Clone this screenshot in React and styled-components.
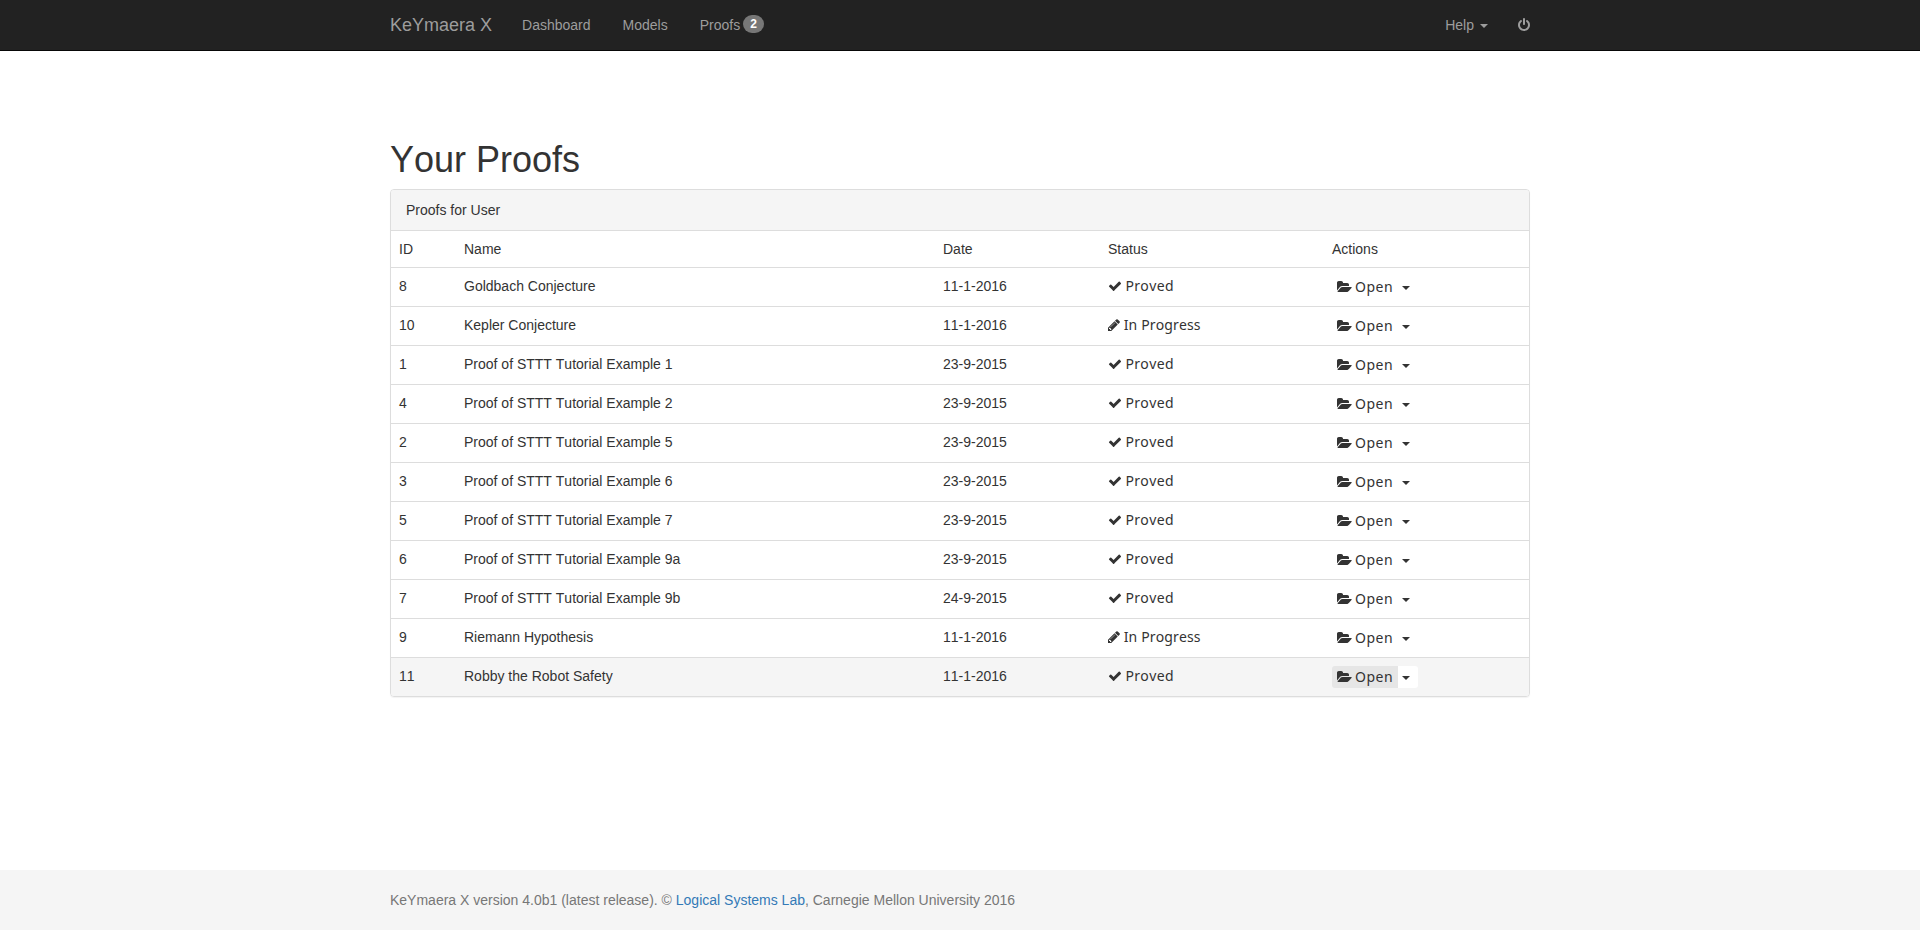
import React from 'react';
import styled, { createGlobalStyle } from 'styled-components';

const GlobalStyle = createGlobalStyle`
  *, *::before, *::after { box-sizing: border-box; }
  body {
    margin: 0;
    background: #fff;
    color: #333;
    font: 14px/20px "Liberation Sans", Arial, sans-serif;
    font-kerning: none;
  }
`;

const Page = styled.div`
  display: flex;
  flex-direction: column;
  min-height: 100vh;
`;

const Container = styled.div`
  width: 1140px;
  margin: 0 auto;
`;

const Navbar = styled.nav`
  height: 51px;
  background: #222;
  border-bottom: 1px solid #080808;
`;

const NavContent = styled(Container)`
  display: flex;
  height: 50px;
`;

const Brand = styled.a`
  padding: 15px 15px 15px 0;
  font-size: 18px;
  color: #9d9d9d;
`;

const NavLink = styled.a`
  padding: 15px ${(p) => p.$end ?? 17}px 15px 15px;
  color: #9d9d9d;
  white-space: nowrap;
`;

const NavRight = styled.div`
  display: flex;
  margin-left: auto;
`;

const Badge = styled.span`
  display: inline-block;
  min-width: 10px;
  margin-left: 3px;
  padding: 3px 7px;
  border-radius: 10px;
  background: #777;
  color: #fff;
  font-size: 12px;
  font-weight: bold;
  line-height: 12px;
  text-align: center;
  vertical-align: middle;
  margin-top: -5px;
`;

const Caret = styled.span`
  display: inline-block;
  margin-left: ${(p) => p.$gap || 0}px;
  border-top: 4px solid currentColor;
  border-left: 4px solid transparent;
  border-right: 4px solid transparent;
  vertical-align: middle;
`;

const Main = styled(Container).attrs({ as: 'main' })`
  flex: 1;
  padding-top: 89px;
`;

const Title = styled.h1`
  margin: 0 0 9px;
  font-size: 36px;
  font-weight: 500;
  line-height: 40px;
`;

const Panel = styled.section`
  border: 1px solid #ddd;
  border-radius: 4px;
  box-shadow: 0 1px 1px rgba(0, 0, 0, 0.05);
  overflow: hidden;
`;

const PanelHeading = styled.div`
  padding: 10px 15px;
  background: #f5f5f5;
`;

const Table = styled.table`
  width: 100%;
  table-layout: fixed;
  border-collapse: separate;
  border-spacing: 0;
`;

const Col = styled.col`
  width: ${(p) => p.$w}px;
`;

const Row = styled.tr`
  background: ${(p) => (p.$active ? '#f5f5f5' : 'transparent')};
`;

const Cell = styled.td`
  padding: 8px;
  border-top: 1px solid #ddd;
  vertical-align: top;
`;

const Status = styled.span`
  display: flex;
  align-items: center;
  height: 20px;
  gap: ${(p) => (p.$proved ? 3.4 : 3.7)}px;
  font-family: "Noto Sans", sans-serif;
  line-height: 14px;
  letter-spacing: ${(p) => (p.$proved ? 0.36 : 0.14)}px;
`;

const ButtonGroup = styled.div`
  display: flex;
  height: 22px;
`;

const OpenButton = styled.button`
  display: flex;
  align-items: center;
  gap: 3px;
  width: 66px;
  padding: 0 0 0 5px;
  border: 0;
  border-radius: 3px 0 0 3px;
  background: ${(p) => (p.$active ? '#e6e6e6' : '#fff')};
  color: #333;
  font: 14px/14px "Noto Sans", sans-serif;
  font-kerning: none;
  letter-spacing: 0.5px;
`;

const ToggleButton = styled.button`
  display: flex;
  align-items: center;
  justify-content: center;
  width: 20px;
  padding: 2px 4px 0 0;
  border: 0;
  border-radius: 0 3px 3px 0;
  background: #fff;
  color: #333;
`;

const Footer = styled.footer`
  height: 60px;
  padding: 20px 0;
  background: #f5f5f5;
  color: #777;
`;

const FooterLink = styled.a`
  color: #337ab7;
`;

const Glyph = styled.svg`
  flex: none;
  height: 14px;
  width: ${(p) => p.$w}px;
  fill: currentColor;
  vertical-align: ${(p) => p.$shift || 0}px;
`;

const CheckIcon = () => (
  <Glyph $w={14} viewBox="0 0 1792 1792">
    <path d="M1671 566q0 40-28 68l-724 724-136 136q-28 28-68 28t-68-28l-136-136-362-362q-28-28-28-68t28-68l136-136q28-28 68-28t68 28l294 295 656-657q28-28 68-28t68 28l136 136q28 28 28 68z" />
  </Glyph>
);

const PencilIcon = () => (
  <Glyph $w={12} viewBox="128 0 1536 1792">
    <path d="M491 1536l91-91-235-235-91 91v107h128v128h107zm523-928q0-22-22-22-10 0-17 7l-542 542q-7 7-7 17 0 22 22 22 10 0 17-7l542-542q7-7 7-17zm-54-192l416 416-832 832h-416v-416zm683 96q0 53-37 90l-166 166-416-416 166-165q36-38 90-38 53 0 91 38l235 234q37 39 37 91z" />
  </Glyph>
);

const FolderOpenIcon = () => (
  <Glyph $w={15} viewBox="0 0 1920 1792">
    <path d="M1879 952q0 31-31 66l-336 396q-43 51-120.5 86.5t-143.5 35.5h-1088q-34 0-60.5-13t-26.5-43q0-31 31-66l336-396q43-51 120.5-86.5t143.5-35.5h1088q34 0 60.5 13t26.5 43zm-343-344v160h-832q-94 0-197 47.5t-164 119.5l-337 396-5 6q0-4-.5-12.5t-.5-12.5v-960q0-92 66-158t158-66h320q92 0 158 66t66 158v32h544q92 0 158 66t66 158z" />
  </Glyph>
);

const PowerIcon = () => (
  <Glyph $w={12} $shift={-2} viewBox="128 0 1536 1792">
    <path d="M1664 896q0 156-61 298t-164 245-245 164-298 61-298-61-245-164-164-245-61-298q0-182 80.5-343t226.5-270q43-32 95.5-25t83.5 50q32 42 24.5 94.5t-49.5 84.5q-98 74-151.5 181t-53.5 228q0 104 40.5 198.5t109.5 163.5 163.5 109.5 198.5 40.5 198.5-40.5 163.5-109.5 109.5-163.5 40.5-198.5q0-121-53.5-228t-151.5-181q-42-32-49.5-84.5t24.5-94.5q31-43 84-50t95 25q146 109 226.5 270t80.5 343zm-640-768v640q0 52-38 90t-90 38-90-38-38-90v-640q0-52 38-90t90-38 90 38 38 90z" />
  </Glyph>
);

const proofs = [
  [8, 'Goldbach Conjecture', '11-1-2016', true],
  [10, 'Kepler Conjecture', '11-1-2016', false],
  [1, 'Proof of STTT Tutorial Example 1', '23-9-2015', true],
  [4, 'Proof of STTT Tutorial Example 2', '23-9-2015', true],
  [2, 'Proof of STTT Tutorial Example 5', '23-9-2015', true],
  [3, 'Proof of STTT Tutorial Example 6', '23-9-2015', true],
  [5, 'Proof of STTT Tutorial Example 7', '23-9-2015', true],
  [6, 'Proof of STTT Tutorial Example 9a', '23-9-2015', true],
  [7, 'Proof of STTT Tutorial Example 9b', '24-9-2015', true],
  [9, 'Riemann Hypothesis', '11-1-2016', false],
  [11, 'Robby the Robot Safety', '11-1-2016', true],
];

const ACTIVE_ID = 11;

export default function App() {
  return (
    <Page>
      <GlobalStyle />
      <Navbar>
        <NavContent>
          <Brand>KeYmaera X</Brand>
          <NavLink>Dashboard</NavLink>
          <NavLink>Models</NavLink>
          <NavLink>
            Proofs<Badge>2</Badge>
          </NavLink>
          <NavRight>
            <NavLink $end={15}>
              Help<Caret $gap={6} />
            </NavLink>
            <NavLink $end={0}>
              <PowerIcon />
            </NavLink>
          </NavRight>
        </NavContent>
      </Navbar>
      <Main>
        <Title>Your Proofs</Title>
        <Panel>
          <PanelHeading>Proofs for User</PanelHeading>
          <Table>
            <colgroup>
              {[65, 479, 165, 224, 205].map((w) => (
                <Col key={w} $w={w} />
              ))}
            </colgroup>
            <tbody>
              <Row>
                {['ID', 'Name', 'Date', 'Status', 'Actions'].map((label) => (
                  <Cell key={label}>{label}</Cell>
                ))}
              </Row>
              {proofs.map(([id, name, date, proved]) => (
                <Row key={id} $active={id === ACTIVE_ID}>
                  <Cell>{id}</Cell>
                  <Cell>{name}</Cell>
                  <Cell>{date}</Cell>
                  <Cell>
                    <Status $proved={proved}>
                      {proved ? <CheckIcon /> : <PencilIcon />}
                      {proved ? 'Proved' : 'In Progress'}
                    </Status>
                  </Cell>
                  <Cell>
                    <ButtonGroup>
                      <OpenButton $active={id === ACTIVE_ID}>
                        <FolderOpenIcon />
                        Open
                      </OpenButton>
                      <ToggleButton aria-label="More actions">
                        <Caret />
                      </ToggleButton>
                    </ButtonGroup>
                  </Cell>
                </Row>
              ))}
            </tbody>
          </Table>
        </Panel>
      </Main>
      <Footer>
        <Container>
          KeYmaera X version 4.0b1 (latest release). © <FooterLink>Logical Systems Lab</FooterLink>, Carnegie Mellon
          University 2016
        </Container>
      </Footer>
    </Page>
  );
}
